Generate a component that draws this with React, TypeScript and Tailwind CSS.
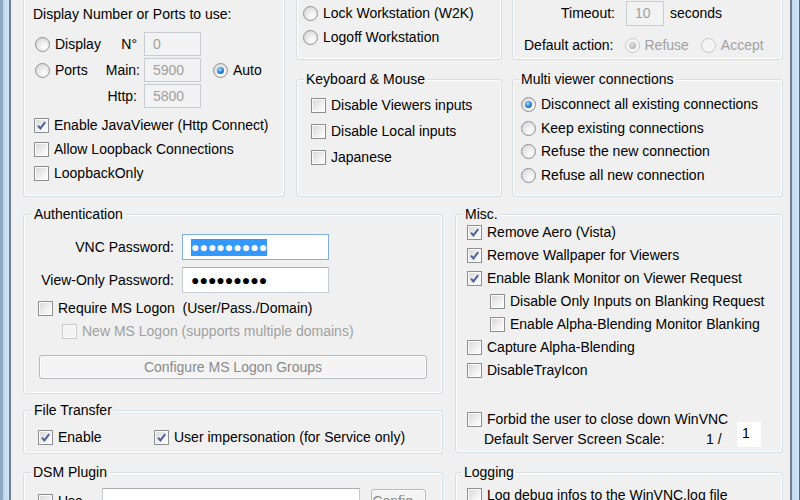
import React from "react"

type Kids = { children?: React.ReactNode; className?: string }

function Check({ checked = false, disabled = false }: { checked?: boolean; disabled?: boolean }) {
  return (
    <span
      className={`flex h-[15px] w-[15px] shrink-0 items-center justify-center border shadow-[inset_0_0_0_1px_#fbfbfb] ${
        disabled
          ? "border-[#c9c9c9] bg-[#f4f4f4]"
          : "border-[#8e8f8f] bg-[linear-gradient(135deg,#d6d6d6,#f3f3f3_65%,#ffffff)]"
      }`}
    >
      {checked && (
        <svg viewBox="0 0 12 12" className="h-[11px] w-[11px]">
          <path d="M2.2 6.2 L4.8 9.2 L10 2.4" fill="none" stroke="#4b5f98" strokeWidth="2.1" />
        </svg>
      )}
    </span>
  )
}

function Radio({ checked = false, disabled = false }: { checked?: boolean; disabled?: boolean }) {
  return (
    <span
      className={`flex h-[15px] w-[15px] shrink-0 items-center justify-center rounded-full border ${
        disabled
          ? "border-[#c9c9c9] bg-[#f4f4f4]"
          : "border-[#8e8f8f] bg-[radial-gradient(circle_at_65%_70%,#ffffff,#e6e6e6_55%,#cfcfcf)]"
      }`}
    >
      {checked && (
        <span
          className={`h-[7px] w-[7px] rounded-full ${
            disabled
              ? "bg-[radial-gradient(circle_at_40%_35%,#e0e0e0,#a6a6a6)]"
              : "bg-[radial-gradient(circle_at_40%_35%,#9fd8ff,#2a7fcb_55%,#14508a)]"
          }`}
        />
      )}
    </span>
  )
}

function CheckRow({
  label,
  checked,
  disabled,
  className = "",
}: {
  label: React.ReactNode
  checked?: boolean
  disabled?: boolean
  className?: string
}) {
  return (
    <div className={`flex items-center gap-[5px] ${className}`}>
      <Check checked={checked} disabled={disabled} />
      <span className={`whitespace-pre ${disabled ? "text-[#a0a0a0]" : ""}`}>{label}</span>
    </div>
  )
}

function RadioRow({
  label,
  checked,
  disabled,
  className = "",
}: {
  label: string
  checked?: boolean
  disabled?: boolean
  className?: string
}) {
  return (
    <div className={`flex items-center gap-[5px] ${className}`}>
      <Radio checked={checked} disabled={disabled} />
      <span className={disabled ? "text-[#a0a0a0]" : ""}>{label}</span>
    </div>
  )
}

// box whose top edge is scrolled out of view
function OpenBox({ children, className = "" }: Kids) {
  return (
    <div
      className={`rounded-b-[3px] border border-t-0 border-[#d5dfe5] shadow-[inset_1px_0_0_#ffffff,inset_-1px_-1px_0_#ffffff] ${className}`}
    >
      {children}
    </div>
  )
}

function Group({
  title,
  legendClass = "ml-[8px]",
  className = "",
  bodyClass = "",
  children,
}: {
  title: string
  legendClass?: string
  className?: string
  bodyClass?: string
  children?: React.ReactNode
}) {
  return (
    <fieldset
      className={`min-w-0 rounded-[3px] border border-[#d5dfe5] shadow-[inset_0_0_0_1px_#ffffff] ${className}`}
    >
      <legend className={`bg-[#f0f0f0] px-[2px] leading-[17px] ${legendClass}`}>{title}</legend>
      <div className={bodyClass}>{children}</div>
    </fieldset>
  )
}

function Field({
  value,
  disabled = false,
  className = "",
}: {
  value: React.ReactNode
  disabled?: boolean
  className?: string
}) {
  return (
    <div
      className={`flex items-center border pl-[8px] ${
        disabled
          ? "border-[#c9cdd1] bg-[#f2f2f2] text-[#a0a0a0]"
          : "border-[#c5cbd2] border-t-[#abadb3] bg-white"
      } ${className}`}
    >
      {value}
    </div>
  )
}

function WinButton({ label, className = "" }: { label: string; className?: string }) {
  return (
    <div
      className={`flex items-center justify-center rounded-[3px] border border-[#b5b9bc] bg-[#f4f4f4] text-[#8a8a8a] shadow-[inset_0_0_0_1px_#fafafa] ${className}`}
    >
      {label}
    </div>
  )
}

export default function App() {
  const dots = "●●●●●●●●●"
  return (
    <div className="flex h-[500px] w-[800px] overflow-hidden bg-[#f0f0f0] font-['Liberation_Sans',Arial,sans-serif] text-[14px] leading-[17px] text-black">
      {/* window frame left */}
      <div className="w-[11px] shrink-0 border-l-[3px] border-r-[2px] border-l-[#8fa8c3] border-r-[#6b7e92] bg-[linear-gradient(to_right,#c0d5ec,#d3e5f7)]" />

      <div className="w-[779px] shrink-0 pl-[12px]">
        {/* top row */}
        <div className="flex h-[197px]">
          <OpenBox className="h-[197px] w-[262px] pl-[9px] pt-[5px]">
            <div className="flex h-[18px] items-center">Display Number or Ports to use:</div>
            <div className="mt-[9px] flex flex-col gap-[2px] pl-[2px]">
              <div className="flex h-[24px] items-center">
                <RadioRow label="Display" className="w-[67px] gap-[4px]" />
                <span className="w-[38px] pr-[3px] text-right">N°</span>
                <Field value="0" disabled className="ml-[4px] h-[24px] w-[57px]" />
              </div>
              <div className="flex h-[24px] items-center">
                <RadioRow label="Ports" className="w-[67px] gap-[4px]" />
                <span className="w-[38px] text-right">Main:</span>
                <Field value="5900" disabled className="ml-[4px] h-[24px] w-[57px]" />
                <RadioRow label="Auto" checked className="ml-[12px] gap-[5px]" />
              </div>
              <div className="flex h-[24px] items-center">
                <span className="ml-[67px] w-[38px] pr-[3px] text-right">Http:</span>
                <Field value="5800" disabled className="ml-[4px] h-[24px] w-[57px]" />
              </div>
            </div>
            <div className="mt-[5px] flex flex-col pl-[1px]">
              <CheckRow label="Enable JavaViewer (Http Connect)" checked className="h-[24px]" />
              <CheckRow label="Allow Loopback Connections" className="h-[24px]" />
              <CheckRow label="LoopbackOnly" className="h-[24px]" />
            </div>
          </OpenBox>

          <div className="ml-[11px] flex w-[206px] flex-col">
            <OpenBox className="h-[60px] pl-[6px] pt-[1px]">
              <RadioRow label="Lock Workstation (W2K)" className="h-[24px]" />
              <RadioRow label="Logoff Workstation" className="h-[24px]" />
            </OpenBox>
            <Group
              title="Keyboard & Mouse"
              legendClass="ml-[7px]"
              className="mt-[11px] h-[126px]"
              bodyClass="pl-[14px] pt-[4px]"
            >
              <CheckRow label="Disable Viewers inputs" className="h-[26px]" />
              <CheckRow label="Disable Local inputs" className="h-[26px]" />
              <CheckRow label="Japanese" className="h-[26px]" />
            </Group>
          </div>

          <div className="ml-[10px] flex w-[271px] flex-col">
            <OpenBox className="h-[60px]">
              <div className="mt-[1px] flex h-[25px] items-center pl-[48px]">
                <span>Timeout:</span>
                <Field value="10" disabled className="ml-[11px] h-[25px] w-[38px]" />
                <span className="ml-[6px]">seconds</span>
              </div>
              <div className="mt-[9px] flex h-[20px] items-center pl-[11px]">
                <span>Default action:</span>
                <RadioRow label="Refuse" checked disabled className="ml-[11px]" />
                <RadioRow label="Accept" disabled className="ml-[12px]" />
              </div>
            </OpenBox>
            <Group
              title="Multi viewer connections"
              legendClass="ml-[6px]"
              className="mt-[11px] h-[126px]"
              bodyClass="pl-[8px] pt-[5px]"
            >
              <RadioRow label="Disconnect all existing connections" checked className="h-[23.5px]" />
              <RadioRow label="Keep existing connections" className="h-[23.5px]" />
              <RadioRow label="Refuse the new connection" className="h-[23.5px]" />
              <RadioRow label="Refuse all new connection" className="h-[23.5px]" />
            </Group>
          </div>
        </div>

        {/* bottom row */}
        <div className="flex">
          <div className="flex w-[420px] flex-col">
            <Group title="Authentication" className="mt-[9px] h-[188px]" bodyClass="pt-[11px]">
              <div className="flex items-center">
                <span className="w-[150px] text-right">VNC Password:</span>
                <Field
                  value={<span className="bg-[#3399ff] text-white">{dots}</span>}
                  className="ml-[8px] h-[26px] w-[147px] !border-[#7fb1e0]"
                />
              </div>
              <div className="mt-[7px] flex items-center">
                <span className="w-[150px] text-right">View-Only Password:</span>
                <Field value={dots} className="ml-[8px] h-[26px] w-[147px]" />
              </div>
              <CheckRow label="Require MS Logon  (User/Pass./Domain)" className="mt-[3px] h-[24px] pl-[14px]" />
              <CheckRow
                label="New MS Logon (supports multiple domains)"
                disabled
                className="h-[23px] pl-[38px]"
              />
              <WinButton label="Configure MS Logon Groups" className="ml-[15px] mt-[12px] h-[24px] w-[388px]" />
            </Group>

            <Group title="File Transfer" className="mt-[8px] h-[52px]" bodyClass="pt-[6px]">
              <div className="flex h-[24px] items-center pl-[14px]">
                <CheckRow label="Enable" checked className="w-[116px]" />
                <CheckRow label="User impersonation (for Service only)" checked />
              </div>
            </Group>

            <Group title="DSM Plugin" legendClass="ml-[7px]" className="mt-[10px] h-[80px]" bodyClass="pt-[7px]">
              <div className="flex items-start pl-[14px]">
                <CheckRow label="Use" className="mt-[5px] w-[64px]" />
                <Field value="" className="h-[24px] w-[258px]" />
                <WinButton label="Config..." className="ml-[11px] mt-[1px] h-[24px] w-[55px]" />
              </div>
            </Group>
          </div>

          <div className="ml-[12px] flex w-[328px] flex-col">
            <Group title="Misc." legendClass="ml-[7px]" className="mt-[9px] h-[247px]" bodyClass="-mt-[2px] pl-[11px]">
              <CheckRow label="Remove Aero (Vista)" checked className="h-[23px]" />
              <CheckRow label="Remove Wallpaper for Viewers" checked className="h-[23px]" />
              <CheckRow label="Enable Blank Monitor on Viewer Request" checked className="h-[23px]" />
              <CheckRow label="Disable Only Inputs on Blanking Request" className="h-[23px] pl-[23px]" />
              <CheckRow label="Enable Alpha-Blending Monitor Blanking" className="h-[23px] pl-[23px]" />
              <CheckRow label="Capture Alpha-Blending" className="h-[23px]" />
              <CheckRow label="DisableTrayIcon" className="h-[23px]" />
              <div className="mt-[27px] flex">
                <div className="w-[270px]">
                  <CheckRow label="Forbid the user to close down WinVNC" className="h-[20px]" />
                  <div className="flex h-[20px] items-center pl-[17px]">
                    <span className="w-[222px]">Default Server Screen Scale:</span>
                    <span>1 /</span>
                  </div>
                </div>
                <Field
                  value="1"
                  className="mb-[2px] h-[25px] w-[24px] self-end !items-start !border-white !pl-[4px] pt-[2px]"
                />
              </div>
            </Group>

            <Group title="Logging" legendClass="ml-[6px]" className="mt-[11px] h-[60px]" bodyClass="pl-[11px] pt-[2px]">
              <CheckRow label="Log debug infos to the WinVNC.log file" className="h-[24px]" />
            </Group>
          </div>
        </div>
      </div>

      {/* window frame right */}
      <div className="w-[10px] shrink-0 border-l-[2px] border-r-[1px] border-l-[#6f7f8e] border-r-[#2f7593] bg-[linear-gradient(to_right,#c2d9f1,#d0e4f8)]" />
    </div>
  )
}
